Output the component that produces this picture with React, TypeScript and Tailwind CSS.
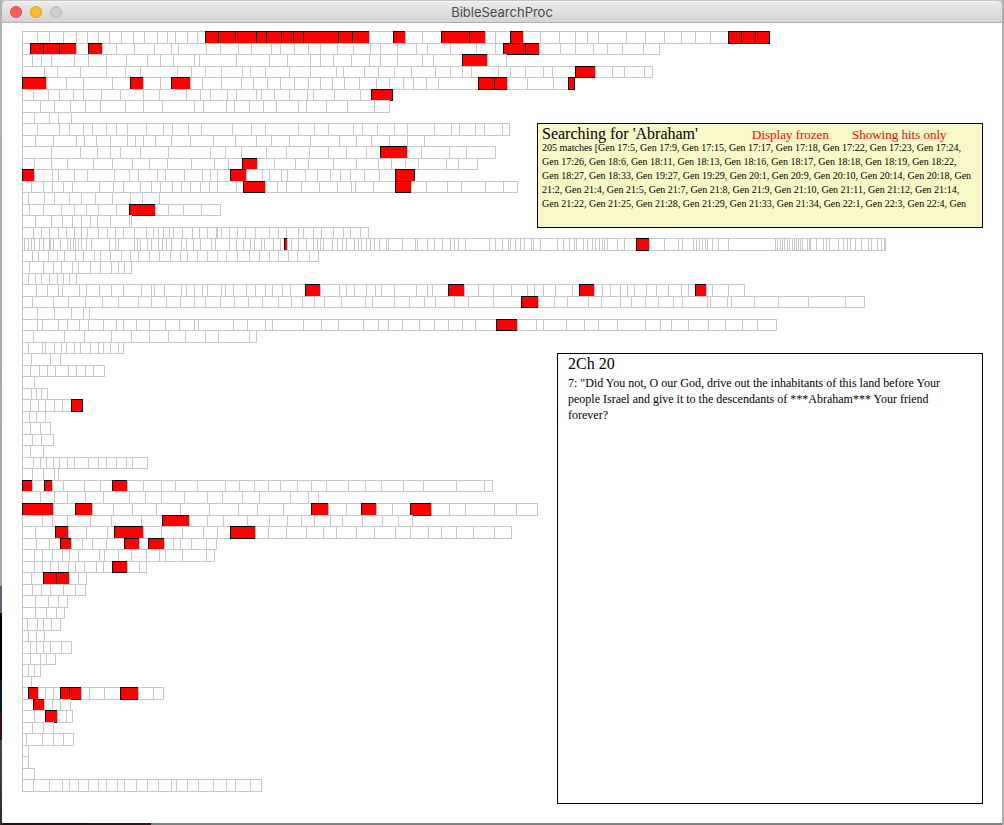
const CELL_ORIGIN = 22;
const ROW_PITCH = 11.512;
const ROW_HEIGHT = 12;

type Book = {
  name: string;
  // Left edge of every chapter, closed by the right edge of the last one.
  edges: number[];
  // Chapter numbers that contain a match.
  hits?: number[];
};

const BOOKS: Book[] = [
  { name: 'Gen', edges: [22,37,49,63,76,87,98,109,121,133,144,157,167,175,187,197,205,218,235,256,266,281,293,303,338,352,369,393,405,422,441,469,485,495,510,523,540,559,575,587,598,626,645,664,681,695,710,728,741,755,769], hits: [17,18,19,20,21,22,23,24,25,26,28,31,32,35,48,49,50] },
  { name: 'Exo', edges: [22,30,43,59,76,88,102,116,134,154,171,178,206,220,238,251,271,280,294,308,320,337,353,370,380,397,416,427,450,476,495,503,525,539,560,575,593,607,622,643,659], hits: [2,3,4,6,32,33] },
  { name: 'Lev', edges: [22,32,41,51,74,88,106,126,147,160,173,194,199,236,269,287,310,320,333,351,369,380,397,422,433,462,487,506], hits: [26] },
  { name: 'Num', edges: [22,44,57,80,106,125,140,177,191,205,221,242,250,265,289,310,336,343,364,378,394,411,435,450,462,471,498,510,525,543,552,575,595,612,624,644,652], hits: [32] },
  { name: 'Deu', edges: [22,46,66,83,112,130,143,160,171,190,202,221,241,253,267,280,294,308,320,332,344,359,376,389,403,413,426,438,478,494,507,527,553,568,574], hits: [1,6,9,29,30,34] },
  { name: 'Jos', edges: [22,33,48,59,73,83,101,120,143,159,186,200,210,227,236,256,261,274,289,307,313,334,360,371,392], hits: [24] },
  { name: 'Jdg', edges: [22,40,54,70,85,100,125,143,162,194,203,226,234,249,263,276,298,306,326,347,374,389] },
  { name: 'Rut', edges: [22,34,49,58,71] },
  { name: '1Sa', edges: [22,37,59,69,83,92,106,116,127,146,163,172,188,201,232,251,265,298,314,328,353,362,377,394,407,434,451,459,475,484,502,509] },
  { name: '2Sa', edges: [22,35,53,76,84,96,110,127,135,143,155,171,190,213,235,256,271,289,310,339,356,371,389,407,424] },
  { name: '1Ki', edges: [22,51,80,97,110,120,140,168,210,225,241,266,286,309,328,346,366,380,407,421,449,466,495], hits: [18] },
  { name: '2Ki', edges: [22,34,51,67,93,112,132,149,167,191,214,228,242,257,274,295,308,333,356,378,391,405,418,446,458,477], hits: [13] },
  { name: '1Ch', edges: [22,34,52,58,74,87,114,129,138,157,165,184,202,210,217,230,246,262,269,281,287,305,317,330,340,350,364,379,395,414], hits: [1,16,29] },
  { name: '2Ch', edges: [22,31,43,52,63,72,99,113,123,140,151,160,172,181,190,200,209,217,236,243,265,277,286,301,319,337,351,355,373,395,411,426,447,461,485,503,517], hits: [20,30] },
  { name: 'Ezr', edges: [22,28,44,54,69,81,95,112,130,142,159] },
  { name: 'Neh', edges: [22,29,43,61,74,86,98,116,129,155,168,183,201,220], hits: [9] },
  { name: 'Est', edges: [22,35,51,62,72,81,90,97,110,129,131] },
  { name: 'Job', edges: [22,33,41,49,58,66,74,81,87,98,107,115,123,134,146,153,158,163,169,173,182,192,199,207,216,217,221,229,237,245,255,269,278,286,298,303,313,321,333,343,350,360,368] },
  { name: 'Psa', edges: [22,24,28,31,34,39,43,49,50,53,60,67,70,73,75,78,81,86,91,109,115,118,134,137,140,147,151,158,162,166,171,181,186,193,200,211,215,229,236,243,250,254,261,264,273,280,284,287,291,298,306,313,317,320,323,332,337,342,346,354,358,361,366,370,374,379,386,388,402,415,417,427,434,442,450,454,458,465,489,495,502,508,510,515,520,524,531,533,540,557,563,569,574,576,583,587,592,595,599,602,604,607,617,624,636,649,664,678,682,693,696,699,702,705,707,712,718,728,775,777,780,782,784,787,789,792,794,796,798,800,802,807,809,810,816,823,826,829,838,843,847,850,855,861,868,871,877,881,884,885], hits: [47,105] },
  { name: 'Pro', edges: [22,32,38,48,57,64,75,83,94,100,110,121,130,138,149,159,170,180,187,197,207,217,226,237,249,259,269,278,288,297,309,318] },
  { name: 'Ecc', edges: [22,29,43,53,61,72,78,90,100,111,118,124,131] },
  { name: 'Sng', edges: [22,28,35,41,49,57,63,69,76] },
  { name: 'Isa', edges: [22,36,47,58,62,79,86,99,111,123,141,151,154,164,181,186,194,202,207,221,225,233,246,255,265,272,282,290,305,320,339,346,354,366,375,381,394,416,427,432,448,464,478,493,511,527,534,543,555,572,579,594,602,610,620,627,634,646,656,668,681,688,695,706,712,728,744], hits: [29,41,51,63] },
  { name: 'Jer', edges: [22,32,53,68,85,102,118,138,151,166,180,194,205,220,234,248,262,278,291,302,314,324,341,365,372,394,409,424,435,454,468,493,521,538,554,567,588,601,620,631,645,658,673,682,707,710,727,731,754,778,808,845,864], hits: [33] },
  { name: 'Lam', edges: [22,37,54,71,83,89] },
  { name: 'Ezk', edges: [22,37,42,58,67,79,88,103,116,123,136,149,165,179,194,198,233,247,265,272,303,321,338,363,378,388,402,419,434,448,462,475,496,517,536,543,566,584,598,617,645,660,671,688,708,725,742,757,776], hits: [33] },
  { name: 'Dan', edges: [22,33,64,84,111,131,149,168,185,205,218,249,256] },
  { name: 'Hos', edges: [22,28,42,45,54,61,66,74,80,90,98,103,110,118,123] },
  { name: 'Joe', edges: [22,31,50,60] },
  { name: 'Amo', edges: [22,30,39,47,55,68,76,85,93,104] },
  { name: 'Oba', edges: [22,34] },
  { name: 'Jon', edges: [22,31,36,41,47] },
  { name: 'Mic', edges: [22,30,38,45,54,62,71,82], hits: [7] },
  { name: 'Nah', edges: [22,29,36,45] },
  { name: 'Hab', edges: [22,30,40,50] },
  { name: 'Zep', edges: [22,32,41,53] },
  { name: 'Hag', edges: [22,30,43] },
  { name: 'Zec', edges: [22,33,40,46,53,59,67,74,88,98,106,116,126,132,147] },
  { name: 'Mal', edges: [22,32,43,54,58] },
  { name: 'Mat', edges: [22,32,44,52,63,84,100,112,127,143,161,175,197,225,239,254,268,280,297,311,326,348,365,381,403,423,456,484,492], hits: [1,3,8] },
  { name: 'Mar', edges: [22,40,54,67,85,103,129,145,161,184,207,222,242,259,290,308,318] },
  { name: 'Luk', edges: [22,53,75,92,113,132,156,180,209,238,257,283,311,328,346,361,376,392,410,431,449,465,494,516,537], hits: [1,3,13,16,19] },
  { name: 'Joh', edges: [22,42,52,67,90,111,141,162,189,207,223,247,269,287,301,314,330,342,362,382,398,412], hits: [8] },
  { name: 'Act', edges: [22,35,55,68,86,107,114,143,161,182,203,217,230,255,268,286,306,323,336,356,374,395,410,428,441,456,473,494,511], hits: [3,7,13] },
  { name: 'Rom', edges: [22,36,49,60,71,82,92,106,124,139,148,164,173,180,191,206,216], hits: [4,9,11] },
  { name: '1Co', edges: [22,34,42,52,62,69,78,99,104,118,131,146,159,165,182,206,214] },
  { name: '2Co', edges: [22,34,42,50,58,68,75,84,96,103,112,127,139,146], hits: [11] },
  { name: 'Gal', edges: [22,31,43,56,69,78,86], hits: [3,4] },
  { name: 'Eph', edges: [22,32,41,50,63,75,85] },
  { name: 'Php', edges: [22,35,48,58,67] },
  { name: 'Col', edges: [22,35,46,56,64] },
  { name: '1Th', edges: [22,27,37,43,51,60] },
  { name: '2Th', edges: [22,28,36,44] },
  { name: '1Ti', edges: [22,30,36,43,50,61,71] },
  { name: '2Ti', edges: [22,30,40,46,55] },
  { name: 'Tit', edges: [22,28,34,40] },
  { name: 'Phm', edges: [22,31] },
  { name: 'Heb', edges: [22,28,38,45,53,60,69,81,89,104,120,138,153,163], hits: [2,6,7,11] },
  { name: 'Jas', edges: [22,33,44,52,60,70], hits: [2] },
  { name: '1Pe', edges: [22,34,45,57,66,72], hits: [3] },
  { name: '2Pe', edges: [22,32,43,53] },
  { name: '1Jn', edges: [22,26,42,53,63,73] },
  { name: '2Jn', edges: [22,28] },
  { name: '3Jn', edges: [22,28] },
  { name: 'Jud', edges: [22,34] },
  { name: 'Rev', edges: [22,33,49,62,69,78,88,98,106,117,124,136,147,158,171,176,187,198,213,226,235,250,261] },
];

const MATCH_LINES = [
  '205 matches [Gen 17:5, Gen 17:9, Gen 17:15, Gen 17:17, Gen 17:18, Gen 17:22, Gen 17:23, Gen 17:24,',
  'Gen 17:26, Gen 18:6, Gen 18:11, Gen 18:13, Gen 18:16, Gen 18:17, Gen 18:18, Gen 18:19, Gen 18:22,',
  'Gen 18:27, Gen 18:33, Gen 19:27, Gen 19:29, Gen 20:1, Gen 20:9, Gen 20:10, Gen 20:14, Gen 20:18, Gen',
  '21:2, Gen 21:4, Gen 21:5, Gen 21:7, Gen 21:8, Gen 21:9, Gen 21:10, Gen 21:11, Gen 21:12, Gen 21:14,',
  'Gen 21:22, Gen 21:25, Gen 21:28, Gen 21:29, Gen 21:33, Gen 21:34, Gen 22:1, Gen 22:3, Gen 22:4, Gen',
];

const VERSE_LINES = [
  '7: "Did You not, O our God, drive out the inhabitants of this land before Your',
  'people Israel and give it to the descendants of ***Abraham*** Your friend',
  'forever?',
];

function rowTop(index: number) {
  return Math.round(index * ROW_PITCH);
}

function BookRow({ book, index }: { book: Book; index: number }) {
  const top = rowTop(index);
  const height = Math.min(ROW_HEIGHT, rowTop(index + 1) - top);
  return (
    <g>
      {book.edges.slice(0, -1).map((left, i) => {
        const hit = book.hits?.includes(i + 1);
        return (
          <rect
            key={left}
            x={left - CELL_ORIGIN + 0.5}
            y={top + 0.5}
            width={book.edges[i + 1] - left}
            height={height}
            className={hit ? 'fill-[#ff0000] stroke-black' : 'fill-white stroke-[#c8c8c8]'}
          />
        );
      })}
    </g>
  );
}

function ChapterMap() {
  return (
    <svg
      className="col-start-1 row-start-1"
      width="866"
      height="762"
      shapeRendering="crispEdges"
      role="img"
      aria-label="Chapters by book"
    >
      {BOOKS.map((book, index) => (
        <BookRow key={book.name} book={book} index={index} />
      ))}
    </svg>
  );
}

function TitleBar() {
  return (
    <header className="grid h-[22px] grid-cols-[1fr_auto_1fr] items-center rounded-t-[5px] border-t border-b border-t-[#f6f6f6] border-b-[#b1b1b1] bg-linear-to-b from-[#ebebeb] to-[#d3d3d3] px-2">
      <div className="flex gap-2">
        <button aria-label="Close" className="size-3 rounded-full border border-[#e0443e] bg-[#fc605b]" />
        <button aria-label="Minimize" className="size-3 rounded-full border border-[#dea123] bg-[#fdbc2f]" />
        <button aria-label="Zoom" disabled className="size-3 rounded-full border border-[#b9b9b9] bg-[#cfcfcf]" />
      </div>
      <h1 className="font-['Inter',sans-serif] text-[13px] leading-5 text-[#4a4a4a]">BibleSearchProc</h1>
    </header>
  );
}

function SearchPanel() {
  return (
    <section className="h-[105px] w-[446px] overflow-hidden border border-black bg-[#f9f8c8] pl-1 whitespace-nowrap">
      <div className="grid h-[17px] grid-cols-[210px_100px_auto] items-baseline pt-[2px] leading-4">
        <h2 className="text-base leading-4">Searching for 'Abraham'</h2>
        <span className="text-[13px] text-[#ff0000]">Display frozen</span>
        <span className="text-[13px] text-[#ff0000]">Showing hits only</span>
      </div>
      <p className="text-[10px] leading-[14px]">
        {MATCH_LINES.map((line) => (
          <span key={line} className="block">{line}</span>
        ))}
      </p>
    </section>
  );
}

function VersePanel() {
  return (
    <section className="w-[426px] flex-1 border border-black bg-white pl-[10px] whitespace-nowrap">
      <h2 className="text-base leading-5">2Ch 20</h2>
      <p className="pt-px text-[12px] leading-4">
        {VERSE_LINES.map((line) => (
          <span key={line} className="block">{line}</span>
        ))}
      </p>
    </section>
  );
}

export default function App() {
  return (
    <div className="flex min-h-screen bg-[#c4c4c4] font-['Liberation_Serif',serif] text-black">
      <div className="w-[2px] bg-[linear-gradient(to_bottom,#b4b4b4_0,#a4a4a4_586px,#5c6375_586px,#5c6375_613px,#000_613px,#000_680px,#0b1a2c_680px,#0b1a2c_712px,#3a1018_712px,#3a1018_740px,#4a4646_740px,#2c2a2c_100%)]" />
      <div className="flex flex-1 flex-col pt-px">
        <TitleBar />
        <main className="grid flex-1 bg-white pt-2 pr-[19px] pb-[19px] pl-5">
          <ChapterMap />
          <div className="col-start-1 row-start-1 flex flex-col items-end gap-[125px] justify-self-end pt-[92px]">
            <SearchPanel />
            <VersePanel />
          </div>
        </main>
        <div className="h-[2px] bg-[linear-gradient(to_right,#1c1416_0,#2a1a1c_149px,#808080_149px)]" />
      </div>
      <div className="w-[2px] bg-[#b0b0b0]" />
    </div>
  );
}
